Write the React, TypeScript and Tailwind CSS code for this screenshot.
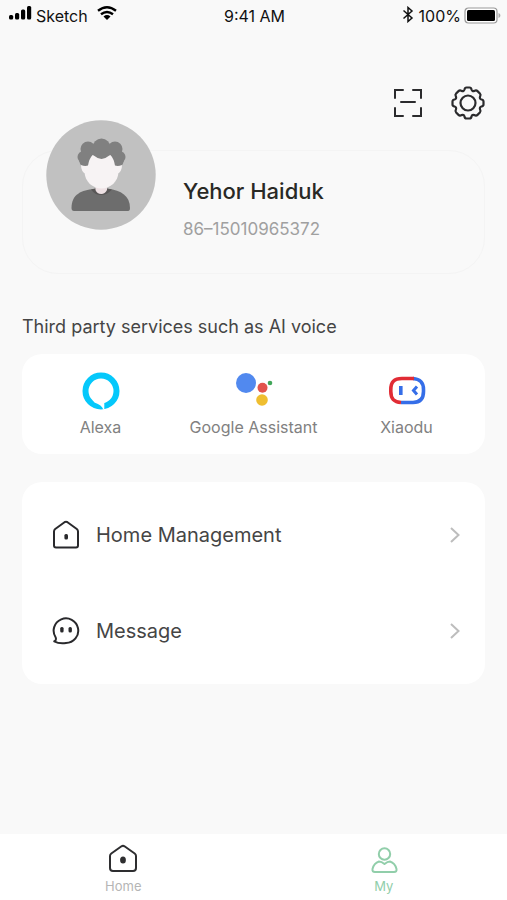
import type { ReactNode } from 'react';

function SignalIcon() {
  return (
    <svg width="25" height="16" viewBox="0 0 25 16" aria-hidden="true">
      <rect x="1" y="9" width="4.200" height="4.500" rx="1.500" />
      <rect x="7" y="7" width="4.200" height="6.500" rx="1.500" />
      <rect x="13" y="3.500" width="4.200" height="10" rx="1.500" />
      <rect x="19" y="0" width="4.200" height="13.500" rx="1.500" />
    </svg>
  );
}

function WifiIcon() {
  return (
    <svg width="20" height="17" viewBox="0 0 20 17" fill="none" stroke="#000" strokeWidth="2.4" aria-hidden="true">
      <path d="M1 4.800Q10-2.200 19 4.800M4 8.300Q10 3.600 16 8.300" />
      <path d="M6.500 10.500Q10 7.700 13.500 10.500L10 14Z" fill="#000" stroke="none" />
    </svg>
  );
}

function BluetoothIcon() {
  return (
    <svg className="mb-1" width="12" height="17" viewBox="0 0 12 17" fill="none" stroke="#111" strokeWidth="1.5" aria-hidden="true">
      <path d="M1.500 4.500L10 12L6 15.500V1.500L10 5L1.500 12.500" />
    </svg>
  );
}

function BatteryIcon() {
  return (
    <svg className="mb-0.5" width="37" height="17" viewBox="0 0 37 17" aria-hidden="true">
      <rect x="1" y="1" width="32" height="15" rx="3.500" fill="#fff" stroke="#999" strokeWidth="1.200" />
      <rect x="3" y="3" width="28" height="11" rx="1.500" fill="#000" />
      <path d="M34.500 6C37 7 37 10 34.500 11Z" fill="#aaa" />
    </svg>
  );
}

function ScanIcon() {
  return (
    <svg width="30" height="30" viewBox="0 0 30 30" fill="none" stroke="#2b2b2d" strokeWidth="2" strokeLinecap="round" aria-hidden="true">
      <path d="M2 10V2H10M20 2H28V10M28 20V28H20M10 28H2V20M8 14H22" />
    </svg>
  );
}

function GearIcon() {
  return (
    <svg width="34" height="34" viewBox="0 0 34 34" fill="none" stroke="#2b2b2d" strokeWidth="2.200" strokeLinejoin="round" aria-hidden="true">
      <path d="M13.500 3.500Q13.800 1.500 15.500 1.500H18.500Q20.200 1.500 20.500 3.500Q21.200 5.700 23.300 4.900Q25.300 3.900 26.500 5.100L28.900 7.500Q30.100 8.700 29.100 10.500Q28.200 12.800 30.400 13.500Q32.500 13.800 32.500 15.500V18.500Q32.500 20.200 30.400 20.500Q28.200 21.200 29.100 23.500Q30.100 25.300 28.900 26.500L26.500 28.900Q25.300 30.100 23.300 29.100Q21.200 28.300 20.500 30.500Q20.200 32.500 18.500 32.500H15.500Q13.800 32.500 13.500 30.500Q12.800 28.300 10.700 29.100Q8.700 30.100 7.500 28.900L5.100 26.500Q3.900 25.300 4.900 23.500Q5.800 21.200 3.600 20.500Q1.500 20.200 1.500 18.500V15.500Q1.500 13.800 3.600 13.500Q5.800 12.800 4.900 10.500Q3.900 8.700 5.100 7.500L7.500 5.100Q8.700 3.900 10.700 4.900Q12.800 5.700 13.500 3.500Z" />
      <circle cx="17" cy="17" r="7.500" />
    </svg>
  );
}

function Avatar() {
  return (
    <svg className="-mt-[31px] shrink-0" width="110" height="110" viewBox="0 0 110 110" role="img" aria-label="Profile picture">
      <circle cx="55" cy="55" r="54.700" fill="#c1c1c1" />
      <path d="M25.500 88C25.500 74 36 70 48 69H62C75 70 84 76 84 88Q84 91 82 91H28Q25.500 91 25.500 88Z" fill="#6d6d6d" />
      <path d="M45 69.500Q55 66 66 69.500Q61 75 55 75Q49 75 45 69.500Z" fill="#595757" />
      <path d="M49.500 63H61V70Q59 74 55.300 74Q51 74 49.500 70Z" fill="#eee1e4" />
      <path d="M35 45Q35 52 40 54V42ZM76 45Q76 52 71 54V42Z" fill="#f7f3f4" />
      <path d="M38.500 32H72.500V51C72.500 62 64 68.500 55.500 68.500C47 68.500 38.500 62 38.500 51Z" fill="#f7f3f4" />
      <g fill="#808080">
        <circle cx="42" cy="29" r="7.500" />
        <circle cx="55.500" cy="27.500" r="9" />
        <circle cx="69" cy="29" r="7.500" />
        <circle cx="37.500" cy="37" r="6" />
        <circle cx="73.500" cy="37" r="6" />
        <path d="M38 27H73V36L67.500 36Q65 34 62.500 36Q55.500 42 48.500 36Q46 34 43.500 36H38Z" />
        <path d="M33 40Q34 44.500 35 45Q39 46.500 42 45.500Q43 39 46.500 35H36ZM78 40Q77 44.500 76 45Q72 46.500 69 45.500Q68 39 64.500 35H75Z" />
      </g>
    </svg>
  );
}

function AlexaLogo() {
  return (
    <svg width="38" height="38" viewBox="0 0 38 38" fill="none" aria-hidden="true">
      <circle cx="19" cy="19" r="15.500" stroke="#05c8fb" strokeWidth="6" />
      <path d="M10 27.500L12.500 30.500Q20 33 21.300 37.500H22.300V30L19 28Z" fill="#fff" />
    </svg>
  );
}

function AssistantLogo() {
  return (
    <svg width="38" height="38" viewBox="0 0 38 38" aria-hidden="true">
      <circle cx="11" cy="11" r="10" fill="#5189ef" />
      <circle cx="27.500" cy="15.800" r="5" fill="#e2534c" />
      <circle cx="35" cy="11" r="2.300" fill="#41a659" />
      <circle cx="27" cy="28" r="5.800" fill="#efbe30" />
    </svg>
  );
}

function XiaoduLogo() {
  return (
    <svg width="38" height="38" viewBox="0 0 38 38" fill="none" strokeWidth="3.600" aria-hidden="true">
      <path d="M25 6.500C32 7 35.500 10 35.500 17.500V19.500C35.500 27 32 30.500 25 30.500H13" stroke="#356ee8" />
      <path d="M26 6.500H14C6 6.500 2.800 10 2.800 17.500V19.500C2.800 27 6 30 13 30.500" stroke="#e12c35" />
      <rect x="11" y="14" width="3.600" height="9" fill="#356ee8" />
      <path d="M29 14.500L25.500 18.500L29 22.500" stroke="#356ee8" strokeWidth="3" />
    </svg>
  );
}

function HouseIcon() {
  return (
    <svg width="28" height="30" viewBox="0 0 28 30" fill="none" stroke="#29292c" strokeWidth="2" strokeLinejoin="round" aria-hidden="true">
      <path d="M2 11.500Q2 10 3.200 9L12.500 2.200Q14 1.200 15.500 2.200L24.800 9Q26 10 26 11.500V25.500Q26 27.500 24 27.500H4Q2 27.500 2 25.500Z" />
      <rect x="12.400" y="14" width="3.600" height="5.500" rx="1.500" fill="#29292c" stroke="none" />
    </svg>
  );
}

function MessageIcon() {
  return (
    <svg width="28" height="30" viewBox="0 0 28 30" fill="none" stroke="#29292c" strokeWidth="2" strokeLinecap="round" strokeLinejoin="round" aria-hidden="true">
      <path d="M3.700 21.500A12.300 12.300 0 1 1 14 27Q7 28 2.300 25.300Q4.600 24.500 3.700 21.500Z" />
      <rect x="8.200" y="11" width="3.400" height="5.600" rx="1.500" fill="#29292c" stroke="none" />
      <rect x="16.500" y="11" width="3.400" height="5.600" rx="1.500" fill="#29292c" stroke="none" />
    </svg>
  );
}

function ChevronIcon() {
  return (
    <svg width="12" height="18" viewBox="0 0 12 18" fill="none" stroke="#bdbdbd" strokeWidth="2" aria-hidden="true">
      <path d="M2 2L9.500 9L2 16" />
    </svg>
  );
}

function HomeTabIcon() {
  return (
    <svg width="30" height="30" viewBox="0 0 30 30" fill="none" stroke="#2e2e30" strokeWidth="2" strokeLinejoin="round" aria-hidden="true">
      <path d="M2 12Q2 10.500 3.300 9.500L13.500 2.300Q15 1.300 16.500 2.300L26.700 9.500Q28 10.500 28 12V24Q28 27 25 27H5Q2 27 2 24Z" />
      <ellipse cx="15" cy="16" rx="2.900" ry="3.500" fill="#2e2e30" stroke="none" />
    </svg>
  );
}

function PersonTabIcon() {
  return (
    <svg width="30" height="30" viewBox="0 0 30 30" fill="none" stroke="#91ceaa" strokeWidth="2" strokeLinejoin="round" aria-hidden="true">
      <circle cx="15.500" cy="10" r="5.700" />
      <path d="M10 17.500Q12.500 17.500 15.500 20Q18.500 17.500 21 17.500Q26 19 27.500 25Q28 28 25 28H6Q3 28 3.500 25Q5 19 10 17.500Z" />
    </svg>
  );
}

function Service({ icon, label }: { icon: ReactNode; label: string }) {
  return (
    <button type="button" className="flex flex-col items-center gap-[7px] pt-[18px] pb-[17px]">
      {icon}
      <span className="text-base leading-5 whitespace-nowrap text-[#818181]">{label}</span>
    </button>
  );
}

function MenuRow({ icon, label }: { icon: ReactNode; label: string }) {
  return (
    <button type="button" className="flex h-24 w-full items-center pr-6 pl-[30px] text-left">
      {icon}
      <span className="ml-4 flex-1 text-xl text-[#454545]">{label}</span>
      <ChevronIcon />
    </button>
  );
}

export default function App() {
  return (
    <div className="flex min-h-screen flex-col bg-[#f9f9f9] font-['Inter','Liberation_Sans',sans-serif] text-[#454545]">
      <header className="grid h-8 grid-cols-[1fr_auto_1fr] items-center pr-1.5 pl-2 text-base text-[#111]">
        <div className="flex items-center gap-[3px]">
          <span className="mb-1"><SignalIcon /></span>
          <span>Sketch</span>
          <span className="mb-1 ml-1.5"><WifiIcon /></span>
        </div>
        <time>9:41 AM</time>
        <div className="flex items-center justify-end gap-[3px]">
          <BluetoothIcon />
          <span className="ml-0.5">100%</span>
          <BatteryIcon />
        </div>
      </header>

      <main className="flex-1 px-[22px] pb-8">
        <div className="flex items-center justify-end gap-7 pt-[53px]">
          <button type="button" aria-label="Scan code" className="flex h-9 items-center"><ScanIcon /></button>
          <button type="button" aria-label="Settings" className="flex h-9 items-center"><GearIcon /></button>
        </div>

        <section className="mt-[29px] flex h-[124px] items-start rounded-[36px] border border-[#f4f4f4] pl-[23px]">
          <Avatar />
          <div className="ml-[27px] pt-[26px]">
            <h1 className="text-[22px] leading-7 font-medium text-[#292925]">Yehor Haiduk</h1>
            <p className="mt-3 text-[17px] leading-6 text-[#a0a0a0]">86–15010965372</p>
          </div>
        </section>

        <h2 className="mt-[41px] text-lg leading-6 text-[#454545]">Third party services such as AI voice</h2>
        <section className="mt-[15px] grid grid-cols-3 rounded-[20px] bg-white px-0.5">
          <Service icon={<AlexaLogo />} label="Alexa" />
          <Service icon={<AssistantLogo />} label="Google Assistant" />
          <Service icon={<XiaoduLogo />} label="Xiaodu" />
        </section>

        <section className="mt-7 rounded-[20px] bg-white py-[5px]">
          <MenuRow icon={<HouseIcon />} label="Home Management" />
          <MenuRow icon={<MessageIcon />} label="Message" />
        </section>
      </main>

      <nav className="flex h-[66px] justify-between bg-white px-[18%] pt-2.5">
        <button type="button" className="flex w-16 flex-col items-center text-[13px] leading-6 text-[#b5b5b5]">
          <HomeTabIcon />
          <span>Home</span>
        </button>
        <button type="button" aria-current="page" className="flex w-16 flex-col items-center text-[13px] leading-6 text-[#91ceaa]">
          <PersonTabIcon />
          <span>My</span>
        </button>
      </nav>
    </div>
  );
}
